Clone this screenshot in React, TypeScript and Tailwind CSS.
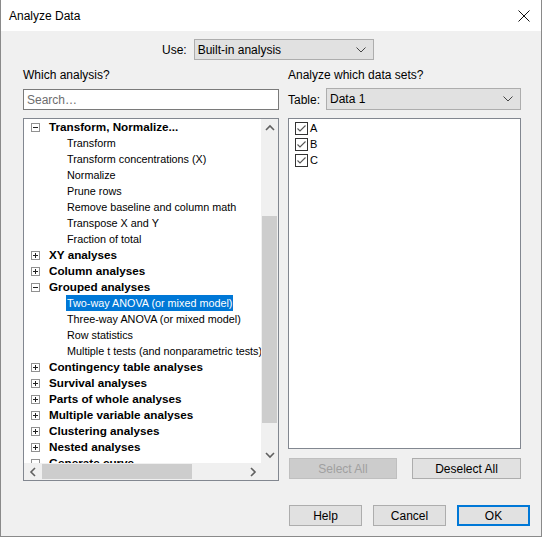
import React from "react";

const ui = { fontFamily: '"Segoe UI", "Liberation Sans", Arial, sans-serif' };
const tree = { fontFamily: 'Tahoma, "Liberation Sans", Arial, sans-serif' };

type Row = { label: string; level: 0 | 1; open?: boolean; selected?: boolean };

const rows: Row[] = [
  { label: "Transform, Normalize...", level: 0, open: true },
  { label: "Transform", level: 1 },
  { label: "Transform concentrations (X)", level: 1 },
  { label: "Normalize", level: 1 },
  { label: "Prune rows", level: 1 },
  { label: "Remove baseline and column math", level: 1 },
  { label: "Transpose X and Y", level: 1 },
  { label: "Fraction of total", level: 1 },
  { label: "XY analyses", level: 0 },
  { label: "Column analyses", level: 0 },
  { label: "Grouped analyses", level: 0, open: true },
  { label: "Two-way ANOVA (or mixed model)", level: 1, selected: true },
  { label: "Three-way ANOVA (or mixed model)", level: 1 },
  { label: "Row statistics", level: 1 },
  { label: "Multiple t tests (and nonparametric tests)", level: 1 },
  { label: "Contingency table analyses", level: 0 },
  { label: "Survival analyses", level: 0 },
  { label: "Parts of whole analyses", level: 0 },
  { label: "Multiple variable analyses", level: 0 },
  { label: "Clustering analyses", level: 0 },
  { label: "Nested analyses", level: 0 },
  { label: "Generate curve", level: 0, open: true },
];

function Chevron({ dir }: { dir: "up" | "down" | "left" | "right" }) {
  const d = {
    up: "M1 6 L5 2 L9 6",
    down: "M1 2 L5 6 L9 2",
    left: "M6 1 L2 5 L6 9",
    right: "M2 1 L6 5 L2 9",
  }[dir];
  const w = dir === "up" || dir === "down" ? 10 : 8;
  const h = dir === "up" || dir === "down" ? 8 : 10;
  return (
    <svg width={w} height={h} viewBox={`0 0 ${w} ${h}`}>
      <path d={d} fill="none" stroke="#606060" strokeWidth="1.6" />
    </svg>
  );
}

function DropArrow() {
  return (
    <svg width="10" height="6" viewBox="0 0 10 6">
      <path d="M0.5 0.5 L5 5 L9.5 0.5" fill="none" stroke="#444" strokeWidth="1" />
    </svg>
  );
}

function Expander({ open }: { open?: boolean }) {
  return (
    <div className="relative h-[9px] w-[9px] border border-[#919191] bg-white">
      <div className="absolute left-[1px] top-[3px] h-px w-[5px] bg-[#222]" />
      {!open && <div className="absolute left-[3px] top-[1px] h-[5px] w-px bg-[#222]" />}
    </div>
  );
}

function Check() {
  return (
    <div className="flex h-[13px] w-[13px] items-center justify-center border border-[#333] bg-white">
      <svg width="11" height="11" viewBox="0 0 11 11">
        <path d="M1.5 5.5 L4 8 L9.5 2.5" fill="none" stroke="#555" strokeWidth="1.1" />
      </svg>
    </div>
  );
}

function Btn({ label, disabled, primary, w }: { label: string; disabled?: boolean; primary?: boolean; w: string }) {
  return (
    <div
      className={`flex items-center justify-center text-[12px] ${w} ${
        primary
          ? "h-[21px] border-2 border-[#0078d7] bg-[#e1e1e1] text-black"
          : disabled
          ? "h-[21px] border border-[#bfbfbf] bg-[#cccccc] text-[#a0a0a0]"
          : "h-[21px] border border-[#adadad] bg-[#e1e1e1] text-black"
      }`}
    >
      {label}
    </div>
  );
}

export default function App() {
  return (
    <div className="flex h-[537px] w-[542px] flex-col border-x border-b border-[#8a8a8a] bg-[#f0f0f0]" style={ui}>
      <div className="flex h-[31px] items-center justify-between bg-white pl-[8px] pr-[11px] text-[12px] text-black">
        <span>Analyze Data</span>
        <svg width="12" height="12" viewBox="0 0 12 12">
          <path d="M0.5 0.5 L11.5 11.5 M11.5 0.5 L0.5 11.5" stroke="#111" strokeWidth="1" />
        </svg>
      </div>

      <div className="flex flex-1 flex-col pl-[22px] pr-[11px] text-[12px] text-black">
        <div className="mt-[8px] flex items-center pl-[139px]">
          <span className="mr-[7px]">Use:</span>
          <div className="flex h-[21px] w-[180px] items-center justify-between border border-[#adadad] bg-[#e1e1e1] pl-[3px] pr-[7px]">
            <span>Built-in analysis</span>
            <DropArrow />
          </div>
        </div>

        <div className="mt-[7px] flex gap-[9px]">
          <div className="flex w-[256px] flex-col">
            <div className="h-[16px] leading-[16px]">Which analysis?</div>
            <div className="mt-[6px] flex h-[21px] items-center border border-[#7a7a7a] bg-white pl-[3px] text-[#6d6d6d]">
              Search…
            </div>
            <div className="mt-[8px] flex h-[363px] flex-col border border-[#828790] bg-white" style={tree}>
              <div className="flex min-h-0 flex-1">
                <div className="relative flex-1 overflow-hidden text-[10.8px]">
                  {rows.map((r) => (
                    <div key={r.label} className="flex h-[16px] items-center whitespace-nowrap">
                      {r.level === 0 ? (
                        <>
                          <div className="ml-[7px] mr-[9px]">
                            <Expander open={r.open} />
                          </div>
                          <span className="text-[11.7px] font-bold">{r.label}</span>
                        </>
                      ) : (
                        <span
                          className={`ml-[42px] px-[1px] leading-[16px] ${
                            r.selected ? "bg-[#0078d7] text-white" : ""
                          }`}
                        >
                          {r.label}
                        </span>
                      )}
                    </div>
                  ))}
                </div>
                <div className="flex w-[17px] flex-col bg-[#f0f0f0]">
                  <div className="flex h-[17px] items-center justify-center">
                    <Chevron dir="up" />
                  </div>
                  <div className="flex-1 pt-[80px] pb-[23px] px-[1px]">
                    <div className="h-full bg-[#cdcdcd]" />
                  </div>
                  <div className="flex h-[17px] items-center justify-center">
                    <Chevron dir="down" />
                  </div>
                </div>
              </div>
              <div className="flex h-[17px] bg-[#f0f0f0]">
                <div className="flex w-[17px] items-center justify-center">
                  <Chevron dir="left" />
                </div>
                <div className="flex-1 py-[1px] pl-[1px] pr-[52px]">
                  <div className="h-full w-[150px] bg-[#cdcdcd]" />
                </div>
                <div className="flex w-[17px] items-center justify-center">
                  <Chevron dir="right" />
                </div>
                <div className="w-[17px]" />
              </div>
            </div>
          </div>

          <div className="flex w-[233px] flex-col">
            <div className="h-[16px] leading-[16px]">Analyze which data sets?</div>
            <div className="mt-[5px] flex items-center">
              <span className="mr-[6px] pt-[2px]">Table:</span>
              <div className="flex h-[22px] flex-1 items-center justify-between border border-[#adadad] bg-[#e1e1e1] pl-[3px] pr-[7px]">
                <span>Data 1</span>
                <DropArrow />
              </div>
            </div>
            <div className="mt-[8px] flex h-[331px] flex-col border border-[#828790] bg-white pl-[6px] pt-[1px] text-[11px]" style={tree}>
              {["A", "B", "C"].map((l) => (
                <div key={l} className="flex h-[16px] items-center">
                  <Check />
                  <span className="ml-[2px]">{l}</span>
                </div>
              ))}
            </div>
            <div className="mt-[9px] flex justify-between pl-[1px]">
              <Btn label="Select All" disabled w="w-[108px]" />
              <Btn label="Deselect All" w="w-[109px]" />
            </div>
          </div>
        </div>

        <div className="mt-[24px] flex justify-end gap-[11px]">
          <Btn label="Help" w="w-[73px]" />
          <Btn label="Cancel" w="w-[73px]" />
          <Btn label="OK" primary w="w-[73px]" />
        </div>
      </div>
    </div>
  );
}
